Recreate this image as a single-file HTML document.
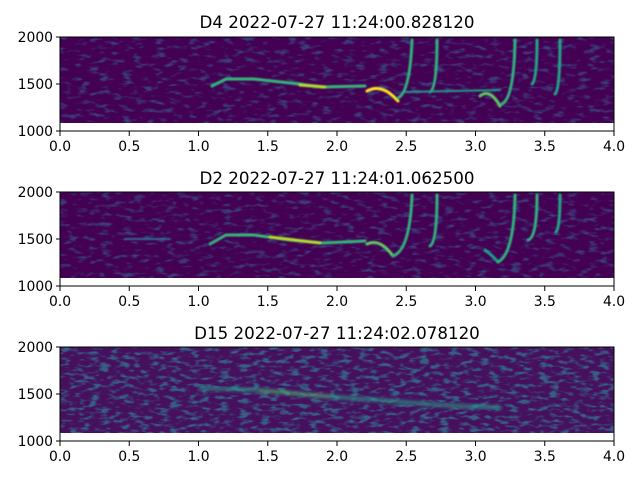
<!DOCTYPE html>
<html><head><meta charset="utf-8"><style>
html,body{margin:0;padding:0;background:#fff;width:640px;height:480px;overflow:hidden}
text{font-family:"DejaVu Sans","Liberation Sans",sans-serif;fill:#000}
</style></head><body>
<svg width="640" height="480" viewBox="0 0 640 480" xmlns="http://www.w3.org/2000/svg">
<defs>
<filter id="n1" x="0" y="0" width="100%" height="100%" color-interpolation-filters="sRGB">
<feTurbulence type="fractalNoise" baseFrequency="0.09 0.22" numOctaves="2" seed="3" result="t"/>
<feColorMatrix in="t" type="matrix" values="0 0 0 0 0.22  0 0 0 0 0.33  0 0 0 0 0.54  0 0 0 4 -2.1"/>
</filter>
<filter id="n3" x="0" y="0" width="100%" height="100%" color-interpolation-filters="sRGB">
<feTurbulence type="fractalNoise" baseFrequency="0.1 0.25" numOctaves="2" seed="8" result="t"/>
<feColorMatrix in="t" type="matrix" values="0 0 0 0 0.2  0 0 0 0 0.45  0 0 0 0 0.55  0 0 0 4 -1.9"/>
</filter>
<filter id="b" color-interpolation-filters="sRGB"><feGaussianBlur stdDeviation="0.7"/></filter>
<filter id="b2" color-interpolation-filters="sRGB"><feGaussianBlur stdDeviation="1.5"/></filter>
<clipPath id="c1"><rect x="60" y="37" width="554" height="86"/></clipPath>
<clipPath id="c2"><rect x="60" y="192" width="554" height="86"/></clipPath>
<clipPath id="c3"><rect x="60" y="347" width="554" height="86"/></clipPath>
</defs>

<g clip-path="url(#c1)">
<rect x="60" y="37" width="554" height="86" fill="#440154"/>
<rect x="60" y="37" width="554" height="86" filter="url(#n1)" opacity="0.7"/>
<g fill="none" stroke-linecap="round" filter="url(#b)">
<path d="M212 86 L226 79 L254 79 L290 83 L323 87 L365 86" stroke="#35b779" stroke-width="3"/>
<path d="M300 85 L325 87" stroke="#b5de2b" stroke-width="3"/>
<path d="M367 91 Q380 84 393 96 L398 101" stroke="#fde725" stroke-width="3"/>
<path d="M398 98 Q410 92 412 40" stroke="#2fb47c" stroke-width="3"/>
<path d="M430 92 Q437 88 437 40" stroke="#2fb47c" stroke-width="3"/>
<path d="M405 92 L500 90" stroke="#1f9e89" stroke-width="2"/>
<path d="M480 96 Q490 88 500 106" stroke="#5ec962" stroke-width="3"/>
<path d="M502 104 Q514 98 515 40" stroke="#2fb47c" stroke-width="3"/>
<path d="M532 84 Q537 80 537 40" stroke="#22a884" stroke-width="3"/>
<path d="M555 94 Q560 90 560 40" stroke="#22a884" stroke-width="3"/>
</g>
</g>
<rect x="60" y="37" width="554" height="94" fill="none" stroke="#000" stroke-width="1"/>

<g clip-path="url(#c2)">
<rect x="60" y="192" width="554" height="86" fill="#440154"/>
<rect x="60" y="192" width="554" height="86" filter="url(#n1)" opacity="0.7"/>
<g fill="none" stroke-linecap="round" filter="url(#b)">
<path d="M125 239 L170 239" stroke="#31688e" stroke-width="2"/>
<path d="M210 244 L226 235 L254 235 L290 240 L323 243 L365 241" stroke="#35b779" stroke-width="3"/>
<path d="M270 237 L320 243" stroke="#b5de2b" stroke-width="3"/>
<path d="M367 244 Q380 238 393 256" stroke="#5ec962" stroke-width="3"/>
<path d="M393 256 Q410 250 412 195" stroke="#2fb47c" stroke-width="3"/>
<path d="M430 246 Q437 242 437 195" stroke="#2fb47c" stroke-width="3"/>
<path d="M485 250 Q492 255 498 262" stroke="#1f9e89" stroke-width="3"/>
<path d="M498 262 Q514 254 515 195" stroke="#2fb47c" stroke-width="3"/>
<path d="M528 240 Q537 238 537 195" stroke="#2fb47c" stroke-width="3"/>
<path d="M556 232 Q560 228 560 195" stroke="#22a884" stroke-width="3"/>
</g>
</g>
<rect x="60" y="192" width="554" height="94" fill="none" stroke="#000" stroke-width="1"/>

<g clip-path="url(#c3)">
<rect x="60" y="347" width="554" height="86" fill="#46105f"/>
<rect x="60" y="347" width="554" height="86" filter="url(#n3)" opacity="0.8"/>
<g fill="none" stroke-linecap="round" filter="url(#b2)" opacity="0.7">
<path d="M200 388 L260 390 L320 396 L380 400 L440 405 L500 408" stroke="#2a9d88" stroke-width="4"/>
<path d="M260 391 L330 396" stroke="#6ccd5a" stroke-width="2"/>
</g>
</g>
<rect x="60" y="347" width="554" height="94" fill="none" stroke="#000" stroke-width="1"/>

<g font-size="16.7" text-anchor="middle">
<text x="337" y="28">D4 2022-07-27 11:24:00.828120</text>
<text x="337" y="184">D2 2022-07-27 11:24:01.062500</text>
<text x="337" y="339">D15 2022-07-27 11:24:02.078120</text>
</g>

<g stroke="#000" stroke-width="1">
<path d="M56 37H60M56 84H60M56 131H60 M56 192H60M56 239H60M56 286H60 M56 347H60M56 394H60M56 441H60"/>
<path d="M60 131v5M129.25 131v5M198.5 131v5M267.75 131v5M337 131v5M406.25 131v5M475.5 131v5M544.75 131v5M614 131v5"/>
<path d="M60 286v5M129.25 286v5M198.5 286v5M267.75 286v5M337 286v5M406.25 286v5M475.5 286v5M544.75 286v5M614 286v5"/>
<path d="M60 441v5M129.25 441v5M198.5 441v5M267.75 441v5M337 441v5M406.25 441v5M475.5 441v5M544.75 441v5M614 441v5"/>
</g>
<g font-size="13.9" text-anchor="end">
<text x="53" y="42">2000</text><text x="53" y="89">1500</text><text x="53" y="136">1000</text>
<text x="53" y="197">2000</text><text x="53" y="244">1500</text><text x="53" y="291">1000</text>
<text x="53" y="352">2000</text><text x="53" y="399">1500</text><text x="53" y="446">1000</text>
</g>
<g font-size="13.9" text-anchor="middle">
<text x="60" y="151">0.0</text><text x="129.25" y="151">0.5</text><text x="198.5" y="151">1.0</text><text x="267.75" y="151">1.5</text><text x="337" y="151">2.0</text><text x="406.25" y="151">2.5</text><text x="475.5" y="151">3.0</text><text x="544.75" y="151">3.5</text><text x="614" y="151">4.0</text>
<text x="60" y="306">0.0</text><text x="129.25" y="306">0.5</text><text x="198.5" y="306">1.0</text><text x="267.75" y="306">1.5</text><text x="337" y="306">2.0</text><text x="406.25" y="306">2.5</text><text x="475.5" y="306">3.0</text><text x="544.75" y="306">3.5</text><text x="614" y="306">4.0</text>
<text x="60" y="461">0.0</text><text x="129.25" y="461">0.5</text><text x="198.5" y="461">1.0</text><text x="267.75" y="461">1.5</text><text x="337" y="461">2.0</text><text x="406.25" y="461">2.5</text><text x="475.5" y="461">3.0</text><text x="544.75" y="461">3.5</text><text x="614" y="461">4.0</text>
</g>
</svg>
</body></html>
